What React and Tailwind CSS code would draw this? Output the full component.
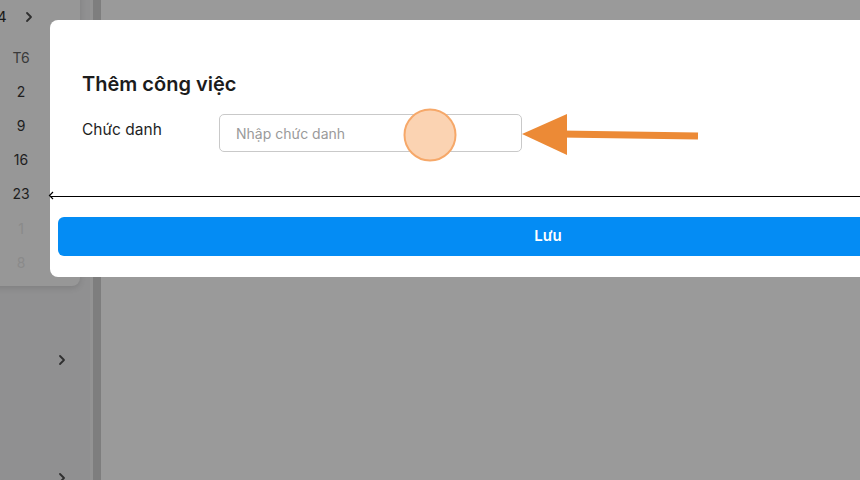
import React from "react";

function Chevron({ className }) {
  return (
    <svg className={className} width="8" height="12" viewBox="0 0 8 12" fill="none">
      <path d="M2 2l4 4-4 4" stroke="#2f2f2f" strokeWidth="1.8" strokeLinecap="round" strokeLinejoin="round" />
    </svg>
  );
}

export default function App() {
  const font = { fontFamily: "Inter, 'Noto Sans', sans-serif" };
  return (
    <div className="relative w-[860px] h-[480px] overflow-hidden flex bg-[#9a9a9a]" style={font}>
      {/* sidebar */}
      <div className="relative w-[90px] h-full bg-[#909091] shrink-0">
        <div className="absolute left-[58px] top-[354px]"><Chevron /></div>
        <div className="absolute left-[58px] top-[472px]"><Chevron /></div>
        {/* calendar popup */}
        <div className="absolute left-[-20px] top-[-10px] w-[100px] h-[296px] bg-[#979797] rounded-br-lg shadow-[0_2px_6px_rgba(0,0,0,0.12)]">
          <div className="flex items-center h-[26px] mt-[14px] pl-[17px] gap-[18px] text-[15px] text-[#1a1a1a]">
            <span>4</span>
            <Chevron />
          </div>
          <div className="flex flex-col items-center w-[82px] text-[14px] text-[#1e1e1e]">
            <div className="h-[34.2px] mt-[10px] flex items-center text-[#3a3a3a]">T6</div>
            <div className="h-[34.2px] flex items-center">2</div>
            <div className="h-[34.2px] flex items-center">9</div>
            <div className="h-[34.2px] flex items-center">16</div>
            <div className="h-[34.2px] flex items-center">23</div>
            <div className="h-[34.2px] flex items-center text-[#8a8a8a]">1</div>
            <div className="h-[34.2px] flex items-center text-[#8a8a8a]">8</div>
          </div>
        </div>
      </div>
      <div className="w-[3px] h-full bg-[#939393] shrink-0" />
      <div className="w-[8px] h-full bg-[#7e7e7e] shrink-0" />
      <div className="flex-1 h-full bg-[#9a9a9a]" />

      {/* modal */}
      <div className="absolute left-[50px] top-[20px] w-[996px] bg-white rounded-lg">
        <div className="pt-[51px] pl-[32px]">
          <h2 className="text-[20px] leading-[26px] font-semibold text-[#1c1c1c]">Thêm công việc</h2>
          <div className="flex mt-[17px]">
            <label className="w-[137px] pt-[5px] text-[15.5px] leading-[22px] text-[#1f1f1f]">Chức danh</label>
            <input
              className="w-[303px] h-[38px] rounded-[5px] border border-[#c9c9c9] px-[16px] text-[14px] text-[#333] placeholder:text-[#9a9a9a] outline-none"
              placeholder="Nhập chức danh"
              style={font}
            />
          </div>
        </div>
        <div className="mt-[44px] border-t border-black" />
        <div className="px-[8px] pt-[20px] pb-[21px]">
          <button className="w-full h-[39px] rounded-md bg-[#048cf4] text-white text-[15px] font-semibold" style={font}>
            Lưu
          </button>
        </div>
      </div>

      {/* annotations */}
      <svg className="absolute left-0 top-0 pointer-events-none" width="860" height="480">
        <path d="M53 192 L49.5 195.5 L53 199" stroke="#000" strokeWidth="1.2" fill="none" />
        <circle cx="430" cy="135" r="25.5" fill="#fbd3b2" stroke="#f6a869" strokeWidth="2" />
        <line x1="560" y1="134" x2="698" y2="136" stroke="#ec8a36" strokeWidth="7" />
        <polygon points="522,134 567,114 567,155" fill="#ec8a36" />
      </svg>
    </div>
  );
}
